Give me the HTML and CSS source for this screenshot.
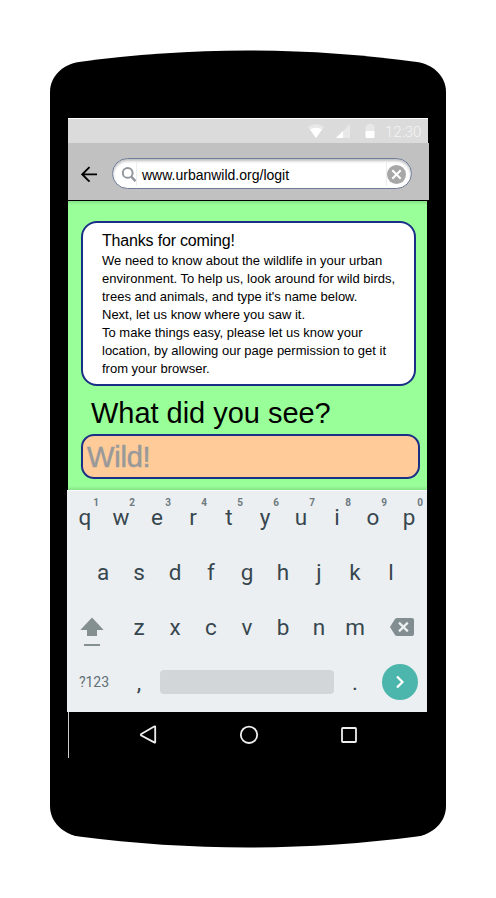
FILE: index.html
```html
<!DOCTYPE html>
<html lang="en">
<head>
<meta charset="utf-8">
<title>Urban Wild</title>
<link rel="stylesheet" href="styles.css">
</head>
<body>
<main class="phone">
  <svg class="phone-shell" width="396" height="798" viewBox="0 0 396 798" aria-hidden="true">
    <path d="M0 42C0 26 13 14.5 29 12C84 4.500 140 .5 198 .5S312 4.500 367 12C383 14.500 396 26 396 42V756C396 772 383 784 367 786.500C312 793.500 256 797.500 198 797.500S84 793.500 29 786.500C13 784 0 772 0 756Z"/>
  </svg>
  <div class="screen">
    <header class="status">
      <svg class="wifi" width="16" height="14" viewBox="0 0 16 14"><path d="M0 3Q8-3 16 3L8 14Z" fill="#e8e8e8"/><path d="M2 5.500Q8 2 14 5.500L8 14Z" fill="#fff"/></svg>
      <svg class="signal" width="14" height="14" viewBox="0 0 14 14"><path d="M0 14 14 0V14Z" fill="#e8e8e8"/><path d="M0 14 7 7V14Z" fill="#fff"/></svg>
      <svg class="battery" width="10" height="14" viewBox="0 0 10 14"><path d="M2.500 0H7.500V1Q9.500 1 9.500 3V7H.5V3Q.5 1 2.500 1Z" fill="#e8e8e8"/><path d="M.5 7H9.500V13Q9.500 14 8.500 14H1.500Q.5 14 .5 13Z" fill="#fff"/></svg>
      <span class="clock">12:30</span>
    </header>
    <nav class="toolbar">
      <svg class="back" width="16" height="16" viewBox="0 0 16 16"><path d="M16 8.400H1.500M8.500 1.200 1.300 8.400l7.200 7.200" fill="none" stroke="#000" stroke-width="1.900"/></svg>
      <div class="address">
        <span class="address-icon left"><svg width="15" height="16" viewBox="0 0 15 16"><circle cx="6.700" cy="6.900" r="4.900" fill="none" stroke="#91979c" stroke-width="2"/><path d="M10.200 10.600 14.500 15.100" stroke="#91979c" stroke-width="2.400"/></svg></span>
        <span class="url">www.urbanwild.org/logit</span>
        <span class="address-icon right"><svg width="19" height="20" viewBox="0 0 19 20"><circle cx="9.500" cy="10.500" r="9.500" fill="#a7a7a7"/><path d="M5.300 6.300 13.700 14.700M13.700 6.300 5.300 14.700" stroke="#fff" stroke-width="2"/></svg></span>
      </div>
    </nav>
    <section class="page">
      <article class="card">
        <h1>Thanks for coming!</h1>
        <p>We need to know about the wildlife in your urban<br>environment. To help us, look around for wild birds,<br>trees and animals, and type it's name below.<br>Next, let us know where you saw it.<br>To make things easy, please let us know your<br>location, by allowing our page permission to get it<br>from your browser.</p>
      </article>
      <h2>What did you see?</h2>
      <div class="field">Wild!</div>
    </section>
    <section class="keyboard">
      <div class="row">
        <span class="key">q<sup>1</sup></span><span class="key">w<sup>2</sup></span><span class="key">e<sup>3</sup></span><span class="key">r<sup>4</sup></span><span class="key">t<sup>5</sup></span><span class="key">y<sup>6</sup></span><span class="key">u<sup>7</sup></span><span class="key">i<sup>8</sup></span><span class="key">o<sup>9</sup></span><span class="key">p<sup>0</sup></span>
      </div>
      <div class="row">
        <span class="key">a</span><span class="key">s</span><span class="key">d</span><span class="key">f</span><span class="key">g</span><span class="key">h</span><span class="key">j</span><span class="key">k</span><span class="key">l</span>
      </div>
      <div class="row">
        <span class="key wide shift"><svg width="24" height="30" viewBox="0 0 24 30"><path d="M12 .5 23.700 13H17V19H7V13H.3ZM4 27H20V29H4Z" fill="#84908f"/></svg></span>
        <span class="key">z</span><span class="key">x</span><span class="key">c</span><span class="key">v</span><span class="key">b</span><span class="key">n</span><span class="key">m</span>
        <span class="key wide delete"><svg width="24" height="18" viewBox="0 0 24 18"><path d="M7 0H22Q24 0 24 2V16Q24 18 22 18H7Q5.800 18 5 16.900L0 9 5 1.100Q5.800 0 7 0Z" fill="#818d90"/><path d="M9 4.600 17.800 13.400M17.800 4.600 9 13.400" stroke="#eceff1" stroke-width="2.200"/></svg></span>
      </div>
      <div class="row">
        <span class="key wide mode">?123</span>
        <span class="key">,</span>
        <span class="space"></span>
        <span class="key dot">.</span>
        <span class="enter"><svg width="36" height="36" viewBox="0 0 36 36"><path d="M15 12.500 20.500 18 15 23.500" fill="none" stroke="#fff" stroke-width="2.200"/></svg></span>
      </div>
    </section>
    <footer class="system">
      <svg width="20" height="20" viewBox="0 0 20 20"><path d="M15.200 1.500Q16.200 1 16.200 2V17Q16.200 18 15.200 17.400L2.300 10.500Q1.300 9.700 2.300 8.900Z"/></svg>
      <svg width="20" height="20" viewBox="0 0 20 20"><circle cx="10" cy="9.800" r="8.200"/></svg>
      <svg width="20" height="20" viewBox="0 0 20 20"><rect x="3" y="3" width="14" height="14" rx=".8"/></svg>
    </footer>
  </div>
</main>
</body>
</html>
```

FILE: styles.css
```css
* { box-sizing: border-box; }
body { margin: 0; background: #fff; font-family: "Liberation Sans", Arial, sans-serif; color: #000; }
svg { display: block; flex: none; }
.phone { position: relative; width: 396px; height: 798px; margin: 50px auto 0; padding: 68px 17px 0; }
.phone-shell { position: absolute; inset: 0; }
.screen { position: relative; width: 362px; }

.status { display: flex; align-items: center; width: 360px; height: 25px; margin-left: 1px; padding: 0 6px 0 0; justify-content: flex-end; background: #dbdbdb; border-top: 1px solid #fff; }
.signal { margin-left: 12px; }
.battery { margin-left: 15px; }
.clock { width: 37px; margin-left: 10px; padding-top: 2px; font: 300 15px/18px Roboto, sans-serif; color: #f4f4f4; white-space: nowrap; }

.toolbar { display: flex; align-items: center; height: 58px; width: 361px; margin-left: 1px; padding: 4px 0 0 13px; background: #c1c1c1; border-bottom: 1px solid #000; }
.address { display: flex; align-items: center; width: 300px; height: 31px; margin-left: 15px; border: 1.500px solid #6f7d98; border-radius: 16px; background: #fff; box-shadow: inset 0 2px 3px #bbb; }
.address-icon { display: flex; align-items: center; height: 24px; }
.left { width: 24px; padding-left: 8px; border-right: 1px solid #eee; }
.right { width: 25px; border-left: 1px solid #eee; }
.url { flex: 1; margin-left: 5px; padding-top: 2px; font-size: 14px; line-height: 18px; }

.page { width: 359px; height: 289px; margin-left: 1px; padding: 20px 7px 0 13px; background: linear-gradient(#87e287, #9f9 4px, #9f9 285px, #87e287); }
.card { width: 335px; height: 165px; padding: 8px 0 0 19px; border: 2px solid #1b2f87; border-radius: 16px; background: #fff; white-space: nowrap; }
h1 { margin: 0 0 1px; font-size: 16px; font-weight: 400; line-height: 20px; letter-spacing: -.18px; }
p { margin: 0; font-size: 13px; line-height: 18px; }
h2 { margin: 10px 0 0 10px; height: 38px; font-size: 29px; font-weight: 400; line-height: 34px; letter-spacing: -.03px; white-space: nowrap; }
.field { width: 339px; height: 45px; padding-left: 4px; border: 2px solid #1b2f87; border-radius: 13px; background: #fc9; font-size: 29px; line-height: 42px; letter-spacing: -.2px; color: #999; -webkit-text-stroke: .5px #999; }

.keyboard { width: 360px; height: 222px; background: #eceff1; box-shadow: inset 0 1px #fafbfb; color: #37474f; font: 400 22.500px/28px Roboto, sans-serif; }
.row { display: flex; align-items: center; justify-content: center; height: 55px; padding-bottom: 1px; }
.key { position: relative; width: 36px; flex: none; text-align: center; }
.key sup { position: absolute; left: 24px; top: -6px; width: 10px; font-size: 10px; line-height: 12px; font-weight: 700; color: #6d7a80; }
.wide { width: 54px; display: flex; justify-content: center; }
.shift { padding: 9px 4px 0 0; }
.delete { padding: 0 0 1px 4px; }
.mode { font-size: 14px; color: #607077; }
.space { width: 174px; height: 24px; margin: 0 3px; border-radius: 4px; background: #d2d6d9; }
.enter { width: 36px; height: 36px; margin: 0 9px; border-radius: 50%; background: #4db6ac; }

.system { display: flex; justify-content: center; gap: 80px; width: 360px; height: 46px; padding-top: 13px; margin-left: 1px; border-left: 1px solid #ccc; }
.system svg { fill: none; stroke: #eee; stroke-width: 1.800; }
```
